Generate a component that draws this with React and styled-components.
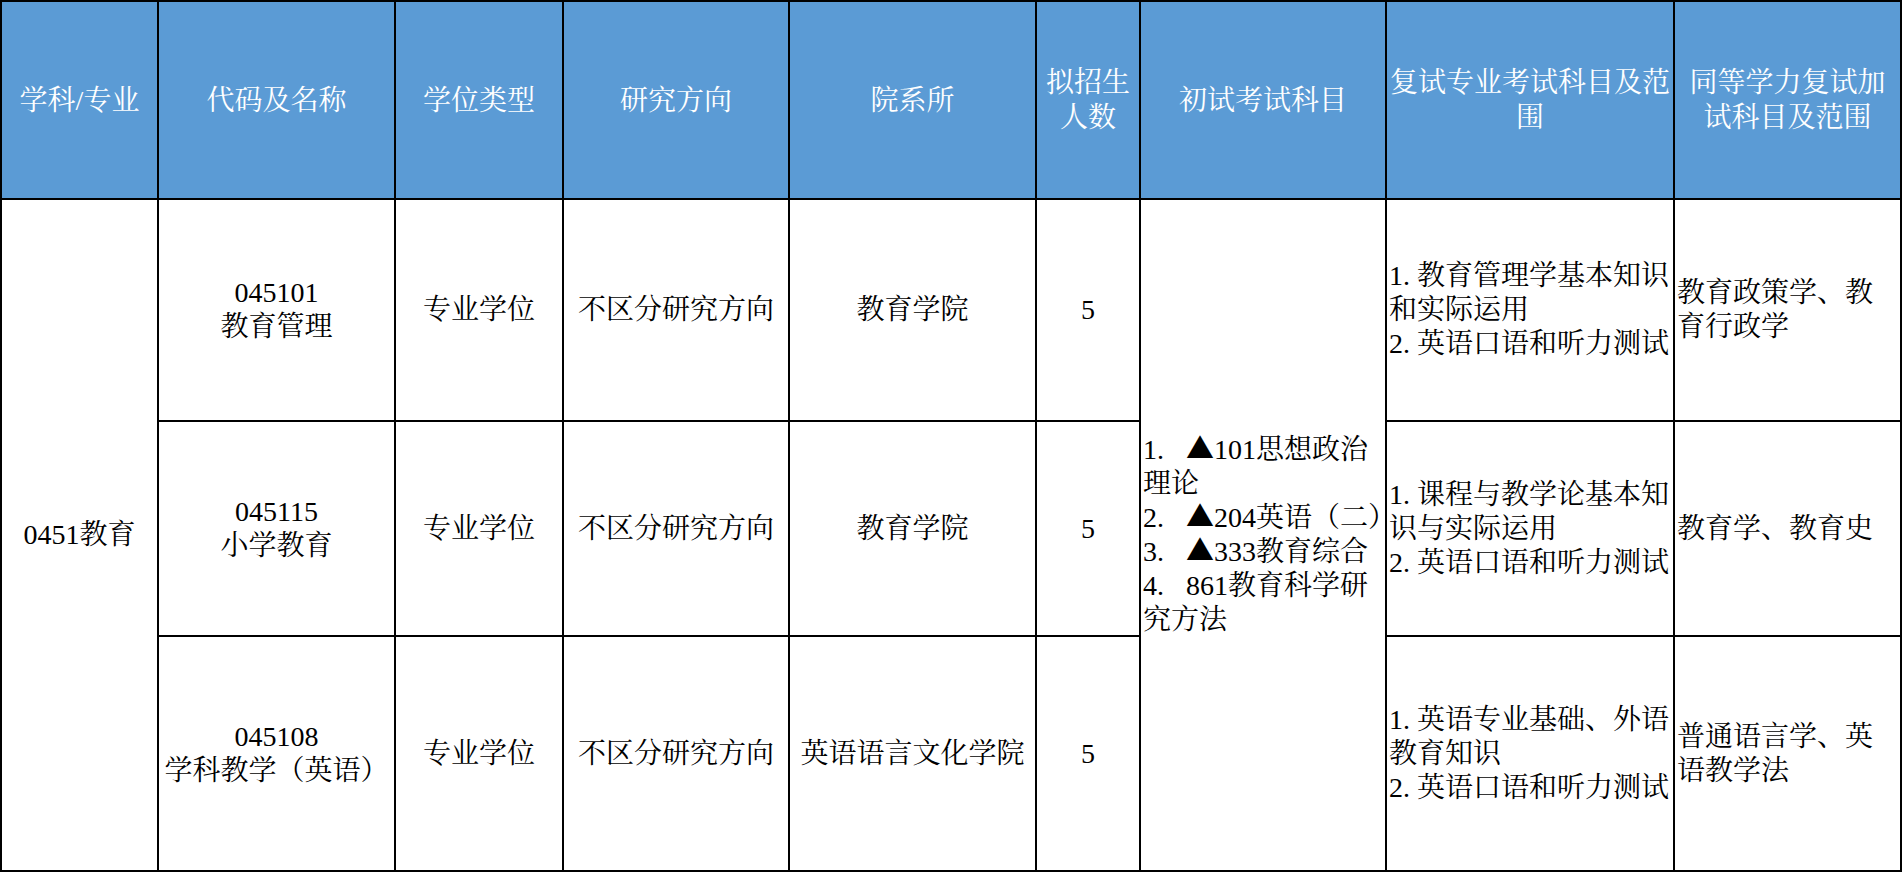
import React from 'react';
import styled, { createGlobalStyle } from 'styled-components';

const GlobalStyle = createGlobalStyle`
  html, body {
    margin: 0;
    padding: 0;
    background: #fff;
  }
  body {
    font-family: "Liberation Serif", "Noto Serif CJK SC", "Noto Sans CJK SC", serif;
  }
`;

const Table = styled.table`
  width: 1902px;
  table-layout: fixed;
  border-collapse: collapse;
  border: 2px solid #000;
  font-size: 28px;
  color: #000;
`;

const HeadRow = styled.tr`
  height: 198px;
`;

const HeadCell = styled.th`
  background-color: #5b9bd5;
  color: #fff;
  font-weight: normal;
  line-height: 35px;
  text-align: center;
  vertical-align: middle;
  border: 2px solid #000;
  padding: 0 2px;
`;

const Row = styled.tr`
  height: ${(p) => p.$h}px;
`;

const Cell = styled.td`
  border: 2px solid #000;
  padding: 0 2px;
  line-height: 34px;
  vertical-align: middle;
  text-align: ${(p) => p.$align || 'center'};
`;

const Line = styled.div`
  white-space: ${(p) => (p.$nowrap ? 'nowrap' : 'pre-wrap')};
`;

const No = styled.span`
  margin-right: 22px;
`;

const Mark = styled.span`
  font-family: "Noto Sans CJK SC", sans-serif;
  line-height: 0;
`;

// column widths taken from the sheet
const cols = [157, 237, 168, 226, 247, 104, 246, 288, 227];

const headers = [
  '学科/专业',
  '代码及名称',
  '学位类型',
  '研究方向',
  '院系所',
  '拟招生人数',
  '初试考试科目',
  '复试专业考试科目及范围',
  '同等学力复试加试科目及范围',
];

const exams = [
  { no: '1.', mark: true, text: '101思想政治理论' },
  { no: '2.', mark: true, text: '204英语（二）', nowrap: true },
  { no: '3.', mark: true, text: '333教育综合', nowrap: true },
  { no: '4.', mark: false, text: '861教育科学研究方法' },
];

const majors = [
  {
    h: 222,
    code: '045101',
    name: '教育管理',
    school: '教育学院',
    retest: ['1. 教育管理学基本知识和实际运用', '2. 英语口语和听力测试'],
    extra: '教育政策学、教育行政学',
  },
  {
    h: 215,
    code: '045115',
    name: '小学教育',
    school: '教育学院',
    retest: ['1. 课程与教学论基本知识与实际运用', '2. 英语口语和听力测试'],
    extra: '教育学、教育史',
  },
  {
    h: 235,
    code: '045108',
    name: '学科教学（英语）',
    school: '英语语言文化学院',
    retest: ['1. 英语专业基础、外语教育知识', '2. 英语口语和听力测试'],
    extra: '普通语言学、英语教学法',
  },
];

const App = () => {
  return (
    <>
      <GlobalStyle />
      <Table>
        <colgroup>
          {cols.map((w, i) => (
            <col key={i} width={w} />
          ))}
        </colgroup>
        <thead>
          <HeadRow>
            {headers.map((h) => (
              <HeadCell key={h} scope="col">
                {h}
              </HeadCell>
            ))}
          </HeadRow>
        </thead>
        <tbody>
          {majors.map((m, index) => (
            <Row key={m.code} $h={m.h}>
              {index === 0 && <Cell rowSpan={3}>0451教育</Cell>}
              <Cell>
                <Line>{m.code}</Line>
                <Line>{m.name}</Line>
              </Cell>
              <Cell>专业学位</Cell>
              <Cell>不区分研究方向</Cell>
              <Cell>{m.school}</Cell>
              <Cell>5</Cell>
              {index === 0 && (
                <Cell rowSpan={3} $align="left">
                  {exams.map((e) => (
                    <Line key={e.no} $nowrap={e.nowrap}>
                      <No>{e.no}</No>
                      {e.mark && <Mark>▲</Mark>}
                      {e.text}
                    </Line>
                  ))}
                </Cell>
              )}
              <Cell $align="left">
                {m.retest.map((r) => (
                  <Line key={r}>{r}</Line>
                ))}
              </Cell>
              <Cell $align="left">{m.extra}</Cell>
            </Row>
          ))}
        </tbody>
      </Table>
    </>
  );
};

export default App;
